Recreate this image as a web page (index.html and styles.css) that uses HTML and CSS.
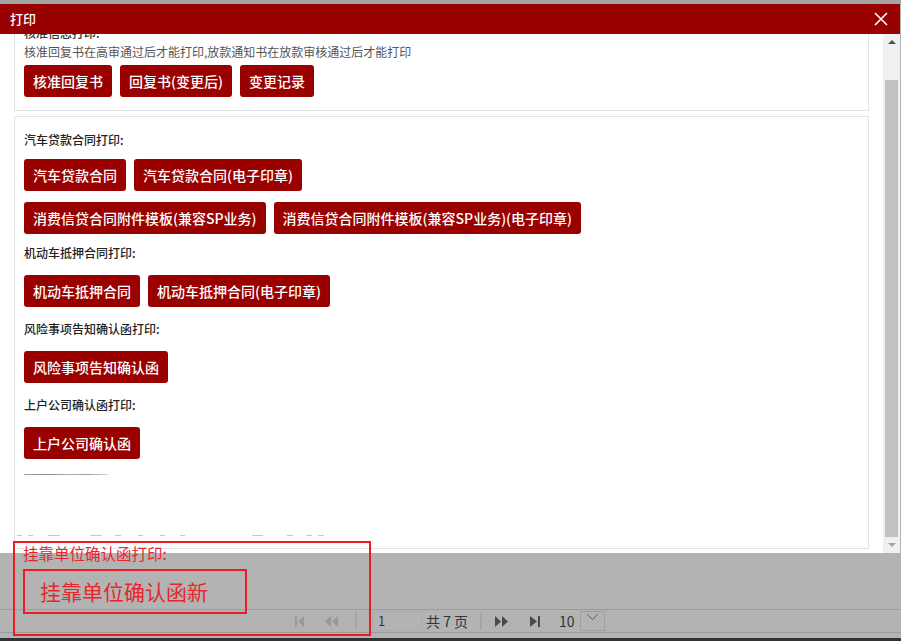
FILE: index.html
```html
<!DOCTYPE html>
<html lang="zh-CN">
<head>
<meta charset="utf-8">
<title>打印</title>
<link rel="stylesheet" href="styles.css">
</head>
<body>
<div class="top-strip"></div>
<div class="dialog">
  <div class="dlg-head">
    <span class="dlg-title">打印</span>
    <svg class="dlg-close" width="14" height="14" viewBox="0 0 14 14"><path d="M1 1L13 13M13 1L1 13" stroke="#fff" stroke-width="1.6" fill="none"/></svg>
  </div>
  <div class="dlg-body">
    <div class="scroll-area">
      <div class="scroll-content">
        <div class="panel panel-first">
          <div class="p1-label">核准信息打印:</div>
          <div class="p1-desc">核准回复书在高审通过后才能打印,放款通知书在放款审核通过后才能打印</div>
          <div class="btn-row p1-btns">
            <button class="btn">核准回复书</button>
            <button class="btn">回复书(变更后)</button>
            <button class="btn">变更记录</button>
          </div>
        </div>
        <div class="panel panel-second">
          <div class="group group-first">
            <div class="group-label">汽车贷款合同打印:</div>
            <div class="btn-row">
              <button class="btn">汽车贷款合同</button>
              <button class="btn">汽车贷款合同(电子印章)</button>
            </div>
            <div class="btn-row btn-row-next">
              <button class="btn">消费信贷合同附件模板(兼容SP业务)</button>
              <button class="btn">消费信贷合同附件模板(兼容SP业务)(电子印章)</button>
            </div>
          </div>
          <div class="group group-tight">
            <div class="group-label">机动车抵押合同打印:</div>
            <div class="btn-row">
              <button class="btn">机动车抵押合同</button>
              <button class="btn">机动车抵押合同(电子印章)</button>
            </div>
          </div>
          <div class="group">
            <div class="group-label">风险事项告知确认函打印:</div>
            <div class="btn-row">
              <button class="btn">风险事项告知确认函</button>
            </div>
          </div>
          <div class="group">
            <div class="group-label">上户公司确认函打印:</div>
            <div class="btn-row">
              <button class="btn">上户公司确认函</button>
            </div>
          </div>
          <div class="glitch-line"></div>
          <svg class="glitch-dashes" width="320" height="1" viewBox="0 0 320 1">
            <g fill="#f5b3b3">
              <rect x="0" y="0" width="5" height="1"/>
              <rect x="11" y="0" width="5" height="1"/>
              <rect x="31" y="0" width="12" height="1"/>
              <rect x="73" y="0" width="12" height="1"/>
              <rect x="98" y="0" width="6" height="1"/>
              <rect x="121" y="0" width="5" height="1"/>
              <rect x="143" y="0" width="5" height="1"/>
              <rect x="163" y="0" width="5" height="1"/>
              <rect x="235" y="0" width="11" height="1"/>
              <rect x="270" y="0" width="6" height="1"/>
              <rect x="289" y="0" width="6" height="1"/>
              <rect x="301" y="0" width="6" height="1"/>
            </g>
          </svg>
        </div>
      </div>
    </div>
    <div class="scrollbar">
      <div class="sb-btn"><span class="arrow-up"></span></div>
      <div class="sb-track"><div class="sb-thumb"></div></div>
      <div class="sb-btn"><span class="arrow-down"></span></div>
    </div>
  </div>
</div>
<div class="backdrop">
  <div class="pager">
    <svg class="pg-first" width="9" height="11" viewBox="0 0 9 11"><rect x="0" y="0" width="2" height="11" fill="#999"/><path d="M9 0L3 5.5L9 11Z" fill="#999"/></svg>
    <svg class="pg-prev" width="13" height="11" viewBox="0 0 13 11"><path d="M6 0L0 5.5L6 11ZM13 0L7 5.5L13 11Z" fill="#999"/></svg>
    <span class="pg-sep pg-sep-a"></span>
    <span class="pg-input">1</span>
    <span class="pg-total">共 7 页</span>
    <span class="pg-sep pg-sep-b"></span>
    <svg class="pg-next" width="13" height="11" viewBox="0 0 13 11"><path d="M0 0L6 5.5L0 11ZM7 0L13 5.5L7 11Z" fill="#4a4a4a"/></svg>
    <svg class="pg-last" width="10" height="11" viewBox="0 0 10 11"><path d="M0 0L7 5.5L0 11Z" fill="#4a4a4a"/><rect x="8" y="0" width="2" height="11" fill="#4a4a4a"/></svg>
    <span class="pg-size">10</span>
    <span class="pg-drop"><svg width="11" height="6" viewBox="0 0 11 6"><path d="M0.5 0.5L5.5 5.5L10.5 0.5" stroke="#555" stroke-width="1" fill="none"/></svg></span>
  </div>
  <div class="foot-gap"></div>
  <div class="dark-bar"></div>
</div>
<div class="annot">
  <div class="annot-label">挂靠单位确认函打印:</div>
  <div class="annot-box">挂靠单位确认函新</div>
</div>
</body>
</html>
```
FILE: styles.css
```css
* { box-sizing: border-box; }
html, body { margin: 0; padding: 0; }
body {
  width: 901px;
  height: 641px;
  overflow: hidden;
  position: relative;
  background: #b3b3b3;
  font-family: "Noto Sans CJK SC", "Microsoft YaHei", sans-serif;
  color: #333;
}
.top-strip { height: 4px; background: #a5a5a5; }
.dialog { width: 900px; }
.dlg-head {
  height: 30px;
  background: #990000;
  display: flex;
  align-items: center;
  justify-content: space-between;
  padding: 0 12px 0 10px;
}
.dlg-title { color: #fff; font-size: 13px; line-height: 30px; font-weight: 500; }
.dlg-close { display: block; }
.dlg-body { display: flex; height: 519px; background: #fff; }
.scroll-area { width: 883px; height: 519px; overflow: hidden; background: #fff; }
.scroll-content { padding: 0 14px; margin-top: -21px; }
.panel { border: 1px solid #e3e3e3; }
.panel-first { padding: 12px 9px 13px; }
.p1-label { font-size: 12px; line-height: 14px; color: #333; font-weight: 500; }
.p1-desc { margin-top: 4px; font-size: 12px; line-height: 16px; color: #555; }
.p1-btns { margin-top: 5px; }
.panel-second { margin-top: 5px; padding: 13px 9px 12px; }
.btn-row { display: flex; flex-wrap: wrap; gap: 11px 8px; }
.btn-row-next { margin-top: 11px; }
.btn {
  height: 32px;
  padding: 0 9px;
  border: none;
  border-radius: 3px;
  background: #990000;
  color: #fff;
  font-family: inherit;
  font-size: 14px;
  font-weight: 500;
  line-height: 32px;
  white-space: nowrap;
}
.group + .group { margin-top: 12px; }
.group.group-tight { margin-top: 9px; }
.group-label { font-size: 12px; line-height: 20px; color: #222; font-weight: 500; margin-bottom: 12px; }
.group-first .group-label { margin-bottom: 9px; }
.glitch-line {
  width: 84px;
  height: 1px;
  margin-top: 15px;
  background: linear-gradient(90deg, #a0a0a0 0%, #8f8f8f 30%, #b8aeae 55%, #9a9a9a 75%, #d6d6d6 100%);
}
.glitch-dashes { display: block; margin: 60px 0 0 -7px; }
.scrollbar { width: 17px; height: 519px; background: #f0f0f0; display: flex; flex-direction: column; }
.sb-btn { height: 17px; display: flex; align-items: center; justify-content: center; }
.arrow-up { width: 0; height: 0; border-left: 4px solid transparent; border-right: 4px solid transparent; border-bottom: 4px solid #505050; }
.arrow-down { width: 0; height: 0; border-left: 4px solid transparent; border-right: 4px solid transparent; border-top: 4px solid #a3a3a3; }
.sb-track { flex: 1; padding: 29px 2px 0; }
.sb-thumb { height: 457px; background: #c1c1c1; }
.backdrop { height: 88px; display: flex; flex-direction: column; }
.pager {
  margin-top: 56px;
  height: 24px;
  border-top: 1px solid #9c9c9c;
  border-bottom: 1px solid #9c9c9c;
  display: flex;
  align-items: center;
  padding-left: 295px;
}
.pager svg { display: block; flex: none; }
.pg-prev { margin-left: 21px; }
.pg-sep { width: 2px; height: 18px; background: #a6a6a6; flex: none; }
.pg-sep-a { margin-left: 17px; }
.pg-input {
  margin-left: 15px;
  width: 50px;
  height: 20px;
  border: 1px solid #ababab;
  border-radius: 3px;
  padding-left: 5px;
  font-size: 13px;
  line-height: 18px;
  color: #333;
}
.pg-total { margin-left: 4px; font-size: 14px; line-height: 20px; color: #333; }
.pg-sep-b { margin-left: 12px; }
.pg-next { margin-left: 13px; }
.pg-last { margin-left: 22px; }
.pg-size {
  margin-left: 16px;
  width: 24px;
  height: 20px;
  padding-left: 3px;
  font-size: 14px;
  line-height: 19px;
  color: #333;
  border-top: 1px solid #bababa;
}
.pg-drop {
  width: 25px;
  height: 20px;
  border: 1px solid #a0a0a0;
  display: flex;
  justify-content: center;
  padding-top: 2px;
}
.foot-gap { height: 5px; }
.dark-bar { height: 3px; background: #333; }
.annot {
  position: absolute;
  left: 13px;
  top: 541px;
  width: 358px;
  height: 95px;
  border: 2px solid #ed1c24;
  color: #e8262c;
}
.annot-label { padding-left: 8px; font-size: 15.5px; line-height: 20px; }
.annot-box {
  margin: 6px 0 0 8px;
  width: 224px;
  height: 45px;
  border: 2px solid #ed1c24;
  padding-left: 15px;
  font-size: 21px;
  line-height: 40px;
}
```
